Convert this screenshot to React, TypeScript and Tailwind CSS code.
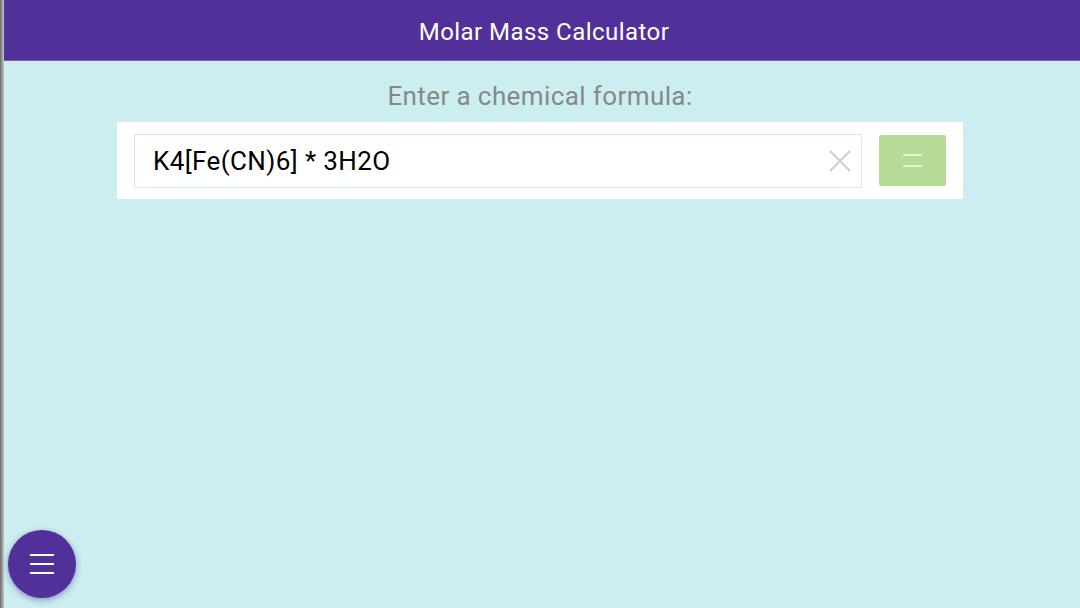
import React from 'react';

const ClearIcon = () => (
    <svg width="22" height="22" viewBox="0 0 22 22" fill="none" stroke="#cfcfcf" strokeWidth="2">
        <path d="M1 1 L21 21 M21 1 L1 21" />
    </svg>
);

export default function App() {
    return (
        <div
            className="relative w-[1080px] h-[608px] overflow-hidden bg-[#cceef0] flex flex-col"
            style={{ fontFamily: 'Roboto, "Noto Sans", sans-serif' }}
        >
            {/* window edge */}
            <div className="absolute left-0 top-0 h-full w-[4px] bg-gradient-to-r from-[#6a6a6a] to-[#c8c8c8] z-10"></div>

            {/* Header */}
            <div className="h-[61px] bg-[#51309a] flex items-center justify-center pl-[8px] pt-[3px] border-b border-[#7a62b8] shrink-0">
                <span className="text-white text-[24px] leading-none tracking-[0.45px]">Molar Mass Calculator</span>
            </div>

            {/* Prompt */}
            <div className="flex justify-center pt-[20px]">
                <span className="text-[#838a8a] text-[26px] leading-[30px] tracking-[0.4px]">Enter a chemical formula:</span>
            </div>

            {/* Input panel */}
            <div className="flex justify-center mt-[11px]">
                <div className="w-[846px] h-[77px] bg-white flex items-center pl-[17px] pr-[17px] gap-[17px]">
                    <div className="w-[728px] h-[54px] border border-[#cfe9ec] flex items-center pl-[18px] pr-[10px]">
                        <span className="flex-1 text-black text-[26px] leading-none tracking-[0.4px]">K4[Fe(CN)6] * 3H2O</span>
                        <ClearIcon />
                    </div>
                    <button className="w-[67px] h-[51px] bg-[#b5dc96] rounded-[2px] flex flex-col items-center justify-center gap-[9px]">
                        <span className="block w-[19px] h-[2px] bg-[#e4f3d6]"></span>
                        <span className="block w-[19px] h-[2px] bg-[#e4f3d6]"></span>
                    </button>
                </div>
            </div>

            {/* FAB */}
            <button className="absolute left-[8px] top-[530px] w-[68px] h-[68px] rounded-full bg-[#51309a] shadow-[0_2px_6px_rgba(60,30,130,0.45)] flex flex-col items-center justify-center gap-[7px]">
                <span className="block w-[24px] h-[2px] bg-white"></span>
                <span className="block w-[24px] h-[2px] bg-white"></span>
                <span className="block w-[24px] h-[2px] bg-white"></span>
            </button>
        </div>
    );
}
